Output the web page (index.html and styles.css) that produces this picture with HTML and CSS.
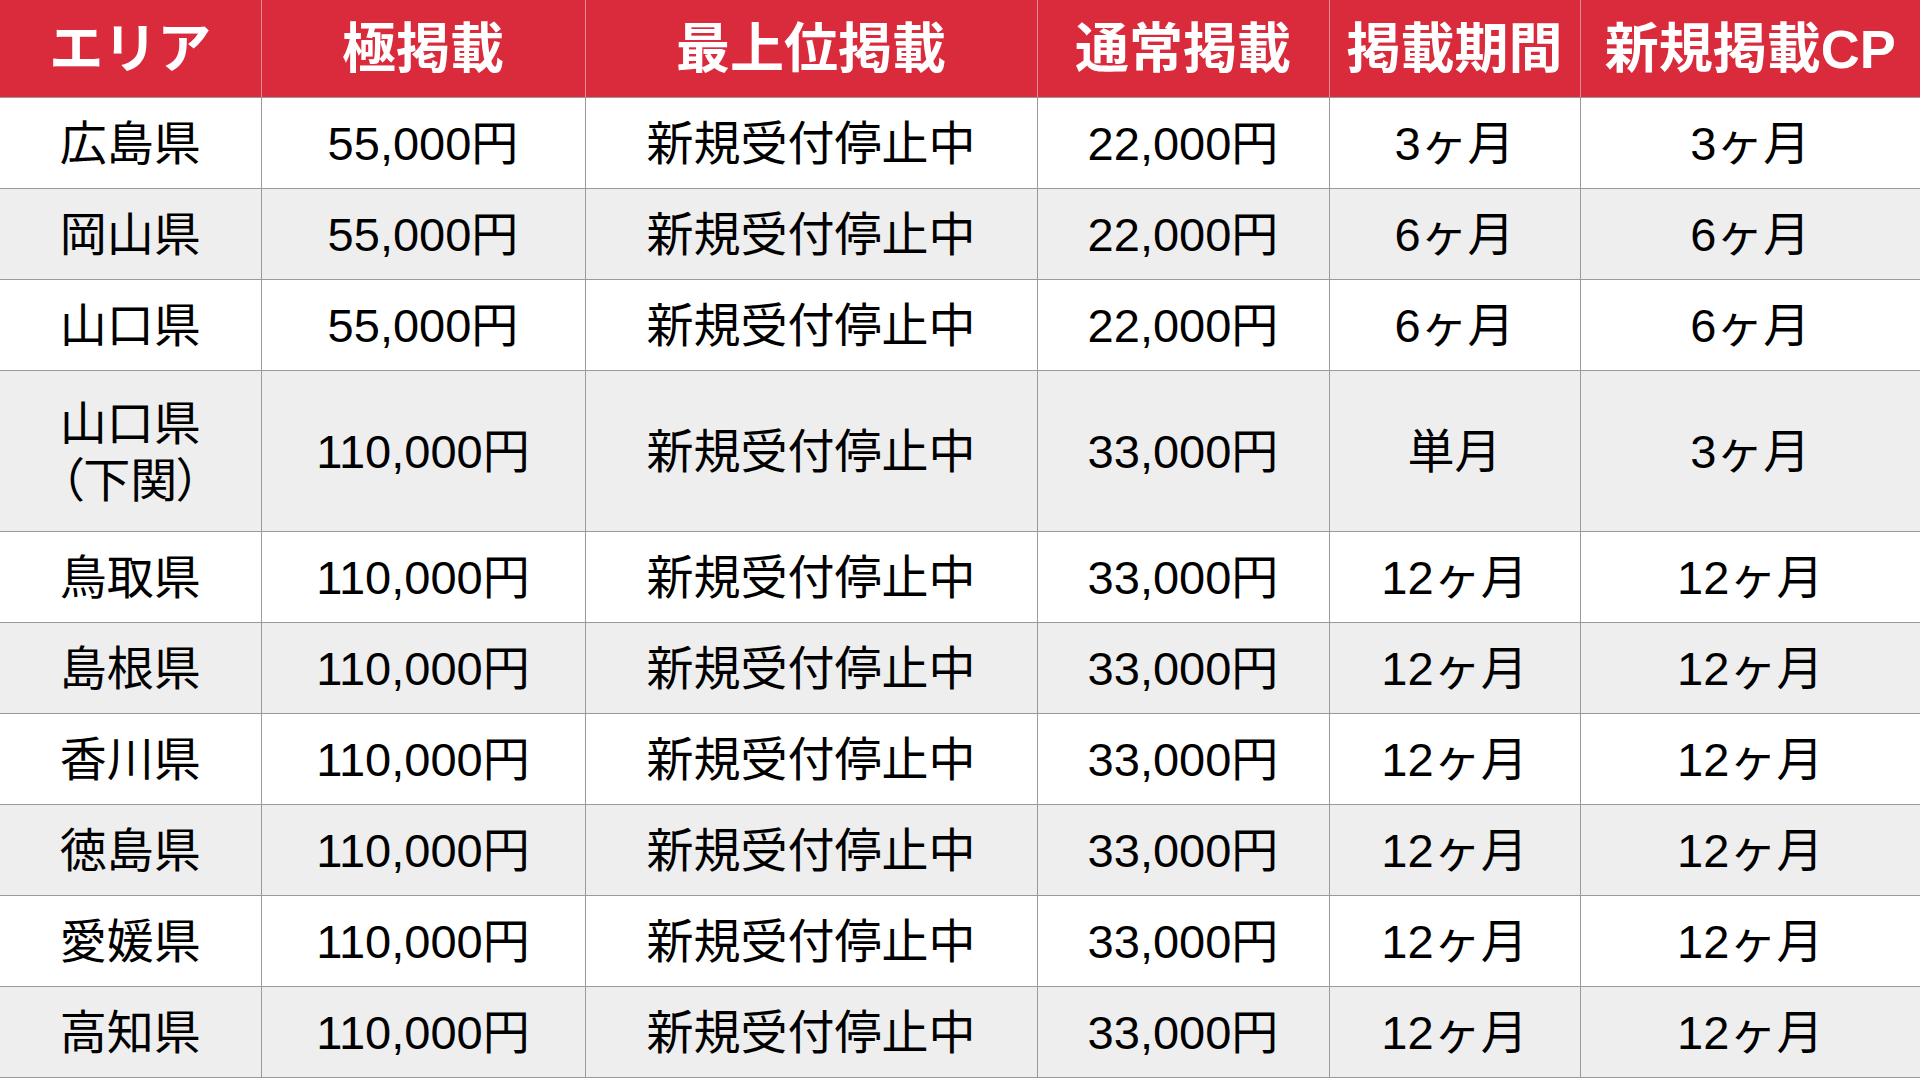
FILE: index.html
```html
<!DOCTYPE html>
<html lang="ja">
<head>
<meta charset="utf-8">
<title>掲載料金表</title>
<link rel="stylesheet" href="styles.css">
</head>
<body>
<table class="price-table">
  <colgroup>
    <col class="c-area">
    <col class="c-kiwami">
    <col class="c-top">
    <col class="c-normal">
    <col class="c-period">
    <col class="c-cp">
  </colgroup>
  <thead>
    <tr>
      <th>エリア</th>
      <th>極掲載</th>
      <th>最上位掲載</th>
      <th>通常掲載</th>
      <th>掲載期間</th>
      <th>新規掲載CP</th>
    </tr>
  </thead>
  <tbody>
    <tr><td>広島県</td><td>55,000円</td><td>新規受付停止中</td><td>22,000円</td><td>3ヶ月</td><td>3ヶ月</td></tr>
    <tr class="alt"><td>岡山県</td><td>55,000円</td><td>新規受付停止中</td><td>22,000円</td><td>6ヶ月</td><td>6ヶ月</td></tr>
    <tr><td>山口県</td><td>55,000円</td><td>新規受付停止中</td><td>22,000円</td><td>6ヶ月</td><td>6ヶ月</td></tr>
    <tr class="alt tall"><td class="two-line">山口県<br><span class="paren">（下関）</span></td><td>110,000円</td><td>新規受付停止中</td><td>33,000円</td><td>単月</td><td>3ヶ月</td></tr>
    <tr><td>鳥取県</td><td>110,000円</td><td>新規受付停止中</td><td>33,000円</td><td>12ヶ月</td><td>12ヶ月</td></tr>
    <tr class="alt"><td>島根県</td><td>110,000円</td><td>新規受付停止中</td><td>33,000円</td><td>12ヶ月</td><td>12ヶ月</td></tr>
    <tr><td>香川県</td><td>110,000円</td><td>新規受付停止中</td><td>33,000円</td><td>12ヶ月</td><td>12ヶ月</td></tr>
    <tr class="alt"><td>徳島県</td><td>110,000円</td><td>新規受付停止中</td><td>33,000円</td><td>12ヶ月</td><td>12ヶ月</td></tr>
    <tr><td>愛媛県</td><td>110,000円</td><td>新規受付停止中</td><td>33,000円</td><td>12ヶ月</td><td>12ヶ月</td></tr>
    <tr class="alt"><td>高知県</td><td>110,000円</td><td>新規受付停止中</td><td>33,000円</td><td>12ヶ月</td><td>12ヶ月</td></tr>
  </tbody>
</table>
</body>
</html>
```

FILE: styles.css
```css
html, body {
  margin: 0;
  padding: 0;
  background: #ffffff;
}

body {
  font-family: "Liberation Sans", "Noto Sans CJK JP", sans-serif;
  color: #000000;
}

.price-table {
  width: 1920px;
  border-collapse: collapse;
  table-layout: fixed;
}

.c-area { width: 261px; }
.c-kiwami { width: 324px; }
.c-top { width: 452px; }
.c-normal { width: 292px; }
.c-period { width: 251px; }
.c-cp { width: 340px; }

.price-table th {
  height: 95px;
  padding: 2px 0 0;
  background: #d92b3b;
  color: #ffffff;
  font-size: 54px;
  font-weight: 700;
  line-height: 1.1;
  text-align: center;
  vertical-align: middle;
  border-left: 1px solid #e98a93;
  border-bottom: 1px solid #9a9a9a;
  white-space: nowrap;
}

.price-table th:first-child {
  border-left: none;
}

.price-table td {
  height: 87px;
  padding: 3px 0 0;
  font-size: 47px;
  font-weight: 400;
  text-align: center;
  vertical-align: middle;
  border: 1px solid #9a9a9a;
  border-top: none;
  white-space: nowrap;
  line-height: 1.2;
}

.price-table td:first-child {
  border-left: none;
}

.price-table td:last-child {
  border-right: none;
}

.price-table tr.alt td {
  background: #eeeeee;
}

.price-table tr.tall td {
  height: 157px;
}

.two-line {
  line-height: 56px;
}

.paren {
  font-feature-settings: "palt";
}
```
